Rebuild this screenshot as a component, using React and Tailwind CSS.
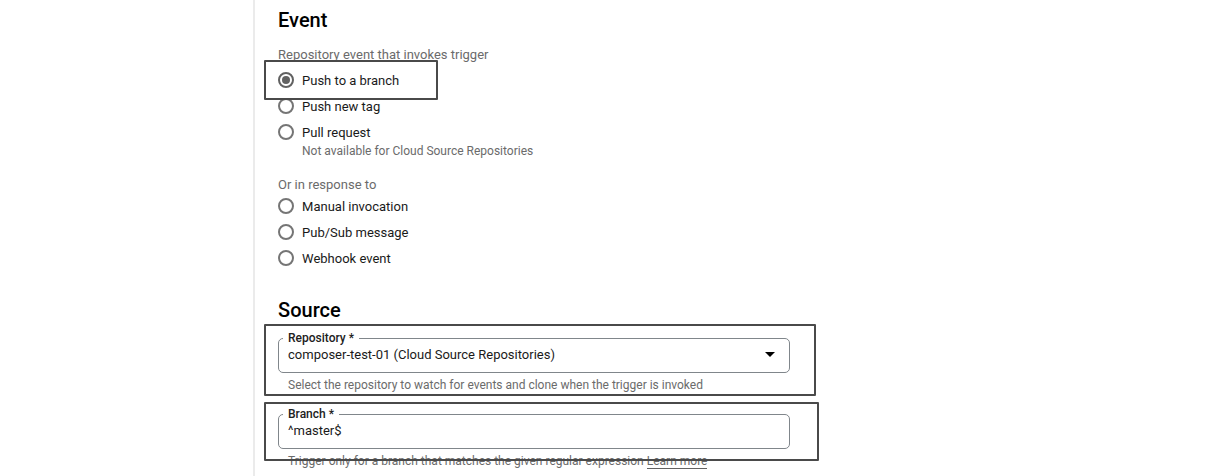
import React from "react";

function Radio({ name, id, label, defaultChecked, note }) {
  return (
    <div>
      <div className="flex h-[26px] items-center gap-2">
        <input
          type="radio"
          id={id}
          name={name}
          defaultChecked={defaultChecked}
          className="m-0 grid size-4 shrink-0 appearance-none place-content-center rounded-full border-2 border-[#757575] bg-transparent before:size-2 before:rounded-full before:content-[''] checked:border-[#616161] checked:before:bg-[#616161]"
        />
        <label htmlFor={id} className="pt-0.5 text-[13px] leading-5 text-[#1a1a1a]">
          {label}
        </label>
      </div>
      {note && <p className="-mt-1 pl-6 text-xs leading-5 text-[#6b6b6b]">{note}</p>}
    </div>
  );
}

function Field({ id, label, children, hint }) {
  return (
    <div>
      <div className="relative h-[35px] rounded-[5px] border border-[#80868b]">
        <label
          htmlFor={id}
          className="absolute -top-2 left-1 bg-white px-[5px] text-xs leading-[14px] font-medium text-[#212121]"
        >
          {label}
        </label>
        {children}
      </div>
      <p className="px-[10px] pt-1 text-xs leading-4 text-[#6b6b6b]">{hint}</p>
    </div>
  );
}

function Highlight({ className }) {
  return (
    <span
      aria-hidden="true"
      className={"pointer-events-none absolute rounded-[1px] border-2 border-[#4a4a4a] " + className}
    />
  );
}

export default function App() {
  return (
    <div className="flex h-screen overflow-hidden bg-white font-['Roboto',sans-serif] text-[#1a1a1a]">
      <div className="w-[21%] shrink-0" />
      <main className="min-w-0 flex-1 border-l-2 border-[#ebebeb] px-[23px] pt-2">
        <form className="max-w-[512px]">
          <h2 className="text-xl leading-6 font-medium text-black">Event</h2>
          <div role="radiogroup" aria-labelledby="repo-event" className="pt-[13px]">
            <p id="repo-event" className="pb-px text-[13px] leading-5 text-[#6b6b6b]">
              Repository event that invokes trigger
            </p>
            <div className="relative pt-px">
              <Radio name="event" id="push-branch" label="Push to a branch" defaultChecked />
              <Highlight className="-top-[6px] -left-[14px] h-10 w-[174px]" />
            </div>
            <Radio name="event" id="push-tag" label="Push new tag" />
            <Radio
              name="event"
              id="pull-request"
              label="Pull request"
              note="Not available for Cloud Source Repositories"
            />
          </div>
          <div role="radiogroup" aria-labelledby="response-event" className="pt-4">
            <p id="response-event" className="text-[13px] leading-4 text-[#6b6b6b]">
              Or in response to
            </p>
            <Radio name="event" id="manual" label="Manual invocation" />
            <Radio name="event" id="pubsub" label="Pub/Sub message" />
            <Radio name="event" id="webhook" label="Webhook event" />
          </div>

          <h2 className="pt-[27px] text-xl leading-6 font-medium text-black">Source</h2>
          <div className="relative pt-4">
            <Field
              id="repository"
              label="Repository *"
              hint="Select the repository to watch for events and clone when the trigger is invoked"
            >
              <select
                id="repository"
                className="block h-full w-full appearance-none bg-transparent px-[9px] pb-0.5 text-[13px] outline-none"
              >
                <option>composer-test-01 (Cloud Source Repositories)</option>
              </select>
              <svg
                viewBox="0 0 10 5"
                className="pointer-events-none absolute top-[13px] right-[14px] h-[5px] w-[10px]"
                aria-hidden="true"
              >
                <path d="M0 0h10L5 5z" fill="#000" />
              </svg>
            </Field>
            <Highlight className="top-[2px] -left-[14px] h-[72px] w-[552px]" />
          </div>
          <div className="relative pt-[21px]">
            <Field
              id="branch"
              label="Branch *"
              hint={
                <>
                  Trigger only for a branch that matches the given regular expression{" "}
                  <a href="#learn-more" className="border-b border-[#616161]">
                    Learn more
                  </a>
                </>
              }
            >
              <input
                id="branch"
                type="text"
                defaultValue="^master$"
                className="block h-full w-full bg-transparent px-[9px] pb-0.5 text-[13px] outline-none"
              />
            </Field>
            <Highlight className="top-[9px] -left-[14px] h-[59px] w-[555px]" />
          </div>
        </form>
      </main>
    </div>
  );
}
